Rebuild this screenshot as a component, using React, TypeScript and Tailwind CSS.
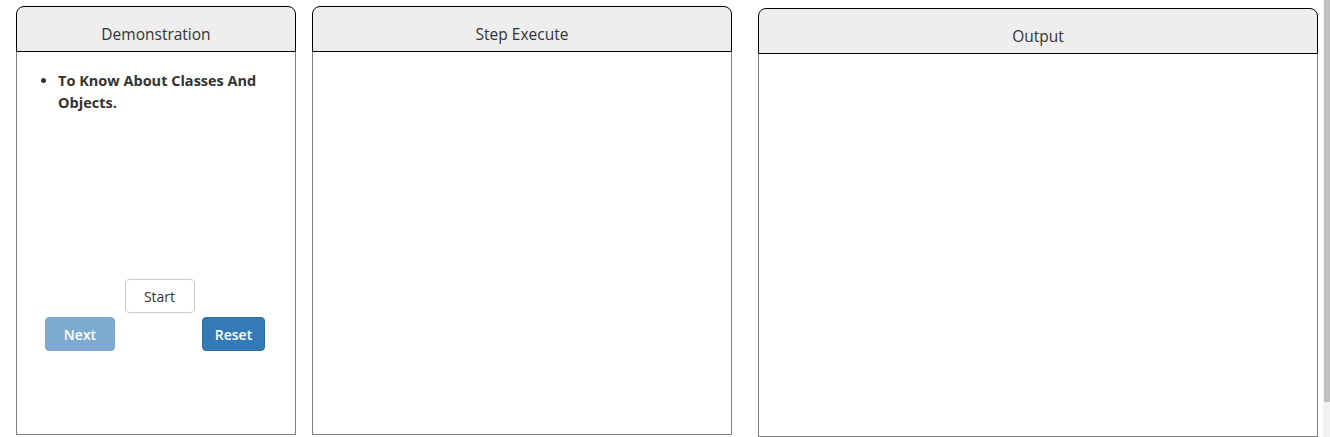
const Panel = ({
  title,
  className = "",
  children,
}: {
  title: string;
  className?: string;
  children?: React.ReactNode;
}) => {
  return (
    <div className={`flex flex-col h-[429px] shrink-0 ${className}`}>
      <div className="h-[46px] shrink-0 flex items-end justify-center pb-[7px] rounded-t-[8px] border border-black bg-[#eeeeee] text-[15.5px] leading-5 text-[#333333]">
        {title}
      </div>
      <div className="flex-1 border-x border-b border-[#808080] bg-white">{children}</div>
    </div>
  );
};

export default function App() {
  return (
    <div
      className="flex w-[1330px] h-[437px] overflow-hidden bg-white"
      style={{ fontFamily: '"Open Sans", "DejaVu Sans", sans-serif' }}
    >
      <div className="flex-1 flex items-start pl-4 pt-1.5">
        <Panel title="Demonstration" className="w-[280px]">
          <div className="flex flex-col h-full">
            <ul className="list-disc pl-[41px] pr-3 pt-[18px] text-[14.5px] leading-[22px] font-bold text-[#333333]">
              <li>To Know About Classes And Objects.</li>
            </ul>
            <div className="mt-auto mb-[83px] flex flex-col">
              <div className="flex justify-center pl-[7px]">
                <button className="w-[70px] h-[34px] rounded border border-[#cccccc] bg-white text-[14px] text-[#333333]">
                  Start
                </button>
              </div>
              <div className="mt-[4px] flex justify-between pl-[28px] pr-[30px]">
                <button className="w-[70px] h-[34px] rounded border border-[#7ea7cf] bg-[#7ea9d1] text-[14px] font-semibold text-white">
                  Next
                </button>
                <button className="w-[63px] h-[34px] rounded border border-[#2e6da4] bg-[#337ab7] text-[14px] font-semibold text-white">
                  Reset
                </button>
              </div>
            </div>
          </div>
        </Panel>
        <Panel title="Step Execute" className="w-[420px] ml-4" />
        <Panel title="Output" className="w-[560px] ml-[26px] mt-0.5" />
      </div>
      <div className="w-[7px] shrink-0 bg-[#f1f1f1] pl-px">
        <div className="h-[402px] bg-[#c1c1c1]" />
      </div>
    </div>
  );
}
